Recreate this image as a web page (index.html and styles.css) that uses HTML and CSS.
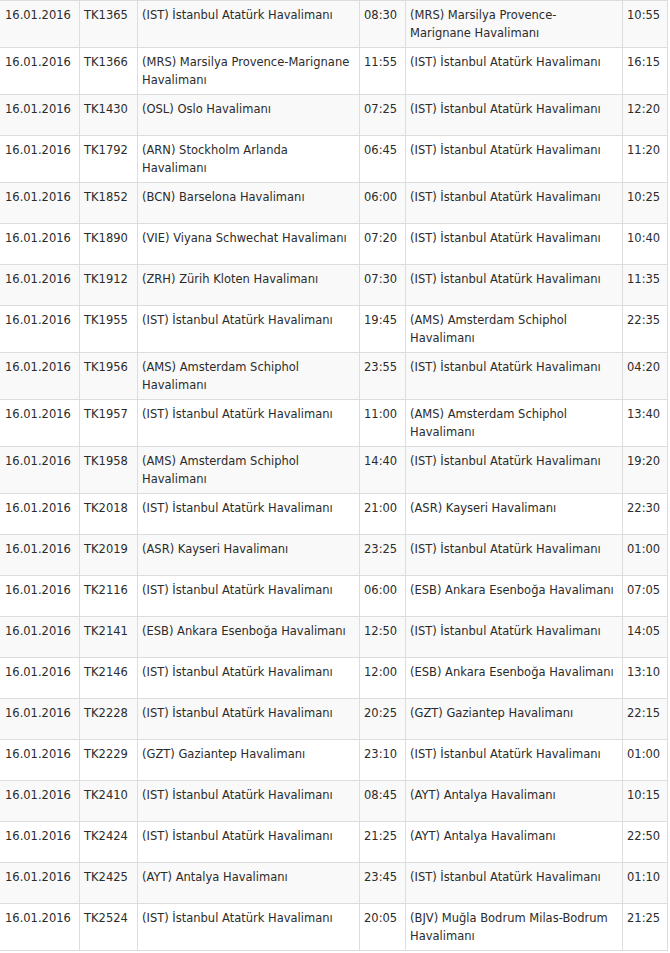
FILE: index.html
```html
<!DOCTYPE html>
<html lang="tr">
<head>
<meta charset="utf-8">
<title>Uçuşlar</title>
<link rel="stylesheet" href="styles.css">
</head>
<body>
<table class="flights">
<colgroup>
<col class="c-date"><col class="c-code"><col class="c-from"><col class="c-time"><col class="c-to"><col class="c-time2">
</colgroup>
<tbody>
<tr><td>16.01.2016</td><td>TK1365</td><td>(IST) İstanbul Atatürk Havalimanı</td><td>08:30</td><td>(MRS) Marsilya Provence-Marignane Havalimanı</td><td>10:55</td></tr>
<tr><td>16.01.2016</td><td>TK1366</td><td>(MRS) Marsilya Provence-Marignane Havalimanı</td><td>11:55</td><td>(IST) İstanbul Atatürk Havalimanı</td><td>16:15</td></tr>
<tr><td>16.01.2016</td><td>TK1430</td><td>(OSL) Oslo Havalimanı</td><td>07:25</td><td>(IST) İstanbul Atatürk Havalimanı</td><td>12:20</td></tr>
<tr><td>16.01.2016</td><td>TK1792</td><td>(ARN) Stockholm Arlanda Havalimanı</td><td>06:45</td><td>(IST) İstanbul Atatürk Havalimanı</td><td>11:20</td></tr>
<tr><td>16.01.2016</td><td>TK1852</td><td>(BCN) Barselona Havalimanı</td><td>06:00</td><td>(IST) İstanbul Atatürk Havalimanı</td><td>10:25</td></tr>
<tr><td>16.01.2016</td><td>TK1890</td><td>(VIE) Viyana Schwechat Havalimanı</td><td>07:20</td><td>(IST) İstanbul Atatürk Havalimanı</td><td>10:40</td></tr>
<tr><td>16.01.2016</td><td>TK1912</td><td>(ZRH) Zürih Kloten Havalimanı</td><td>07:30</td><td>(IST) İstanbul Atatürk Havalimanı</td><td>11:35</td></tr>
<tr><td>16.01.2016</td><td>TK1955</td><td>(IST) İstanbul Atatürk Havalimanı</td><td>19:45</td><td>(AMS) Amsterdam Schiphol Havalimanı</td><td>22:35</td></tr>
<tr><td>16.01.2016</td><td>TK1956</td><td>(AMS) Amsterdam Schiphol Havalimanı</td><td>23:55</td><td>(IST) İstanbul Atatürk Havalimanı</td><td>04:20</td></tr>
<tr><td>16.01.2016</td><td>TK1957</td><td>(IST) İstanbul Atatürk Havalimanı</td><td>11:00</td><td>(AMS) Amsterdam Schiphol Havalimanı</td><td>13:40</td></tr>
<tr><td>16.01.2016</td><td>TK1958</td><td>(AMS) Amsterdam Schiphol Havalimanı</td><td>14:40</td><td>(IST) İstanbul Atatürk Havalimanı</td><td>19:20</td></tr>
<tr><td>16.01.2016</td><td>TK2018</td><td>(IST) İstanbul Atatürk Havalimanı</td><td>21:00</td><td>(ASR) Kayseri Havalimanı</td><td>22:30</td></tr>
<tr><td>16.01.2016</td><td>TK2019</td><td>(ASR) Kayseri Havalimanı</td><td>23:25</td><td>(IST) İstanbul Atatürk Havalimanı</td><td>01:00</td></tr>
<tr><td>16.01.2016</td><td>TK2116</td><td>(IST) İstanbul Atatürk Havalimanı</td><td>06:00</td><td>(ESB) Ankara Esenboğa Havalimanı</td><td>07:05</td></tr>
<tr><td>16.01.2016</td><td>TK2141</td><td>(ESB) Ankara Esenboğa Havalimanı</td><td>12:50</td><td>(IST) İstanbul Atatürk Havalimanı</td><td>14:05</td></tr>
<tr><td>16.01.2016</td><td>TK2146</td><td>(IST) İstanbul Atatürk Havalimanı</td><td>12:00</td><td>(ESB) Ankara Esenboğa Havalimanı</td><td>13:10</td></tr>
<tr><td>16.01.2016</td><td>TK2228</td><td>(IST) İstanbul Atatürk Havalimanı</td><td>20:25</td><td>(GZT) Gaziantep Havalimanı</td><td>22:15</td></tr>
<tr><td>16.01.2016</td><td>TK2229</td><td>(GZT) Gaziantep Havalimanı</td><td>23:10</td><td>(IST) İstanbul Atatürk Havalimanı</td><td>01:00</td></tr>
<tr><td>16.01.2016</td><td>TK2410</td><td>(IST) İstanbul Atatürk Havalimanı</td><td>08:45</td><td>(AYT) Antalya Havalimanı</td><td>10:15</td></tr>
<tr><td>16.01.2016</td><td>TK2424</td><td>(IST) İstanbul Atatürk Havalimanı</td><td>21:25</td><td>(AYT) Antalya Havalimanı</td><td>22:50</td></tr>
<tr><td>16.01.2016</td><td>TK2425</td><td>(AYT) Antalya Havalimanı</td><td>23:45</td><td>(IST) İstanbul Atatürk Havalimanı</td><td>01:10</td></tr>
<tr><td>16.01.2016</td><td>TK2524</td><td>(IST) İstanbul Atatürk Havalimanı</td><td>20:05</td><td>(BJV) Muğla Bodrum Milas-Bodrum Havalimanı</td><td>21:25</td></tr>
</tbody>
</table>
</body>
</html>
```

FILE: styles.css
```css
html, body {
  margin: 0;
  padding: 0;
  background: #ffffff;
}

body {
  font-family: "DejaVu Sans", Verdana, sans-serif;
  font-size: 11.5px;
  line-height: 18px;
  color: #2b2b2b;
}

.flights {
  border-collapse: separate;
  border-spacing: 0;
  table-layout: fixed;
  width: 668px;
  border-top: 1px solid #dddddd;
}

.c-date { width: 80px; }
.c-code { width: 58px; }
.c-from { width: 222px; }
.c-time { width: 46px; }
.c-to { width: 217px; }
.c-time2 { width: 45px; }

.flights td {
  vertical-align: top;
  height: 30px;
  padding: 5px 6px 5px 4px;
  border-right: 1px solid #dddddd;
  border-bottom: 1px solid #dddddd;
  white-space: normal;
}

.flights td:first-child {
  padding-left: 5px;
}

.flights td:nth-child(1),
.flights td:nth-child(2),
.flights td:nth-child(4),
.flights td:nth-child(6) {
  padding-right: 2px;
  white-space: nowrap;
}

.flights tr:nth-child(odd) td {
  background: #f9f9f9;
}
```
